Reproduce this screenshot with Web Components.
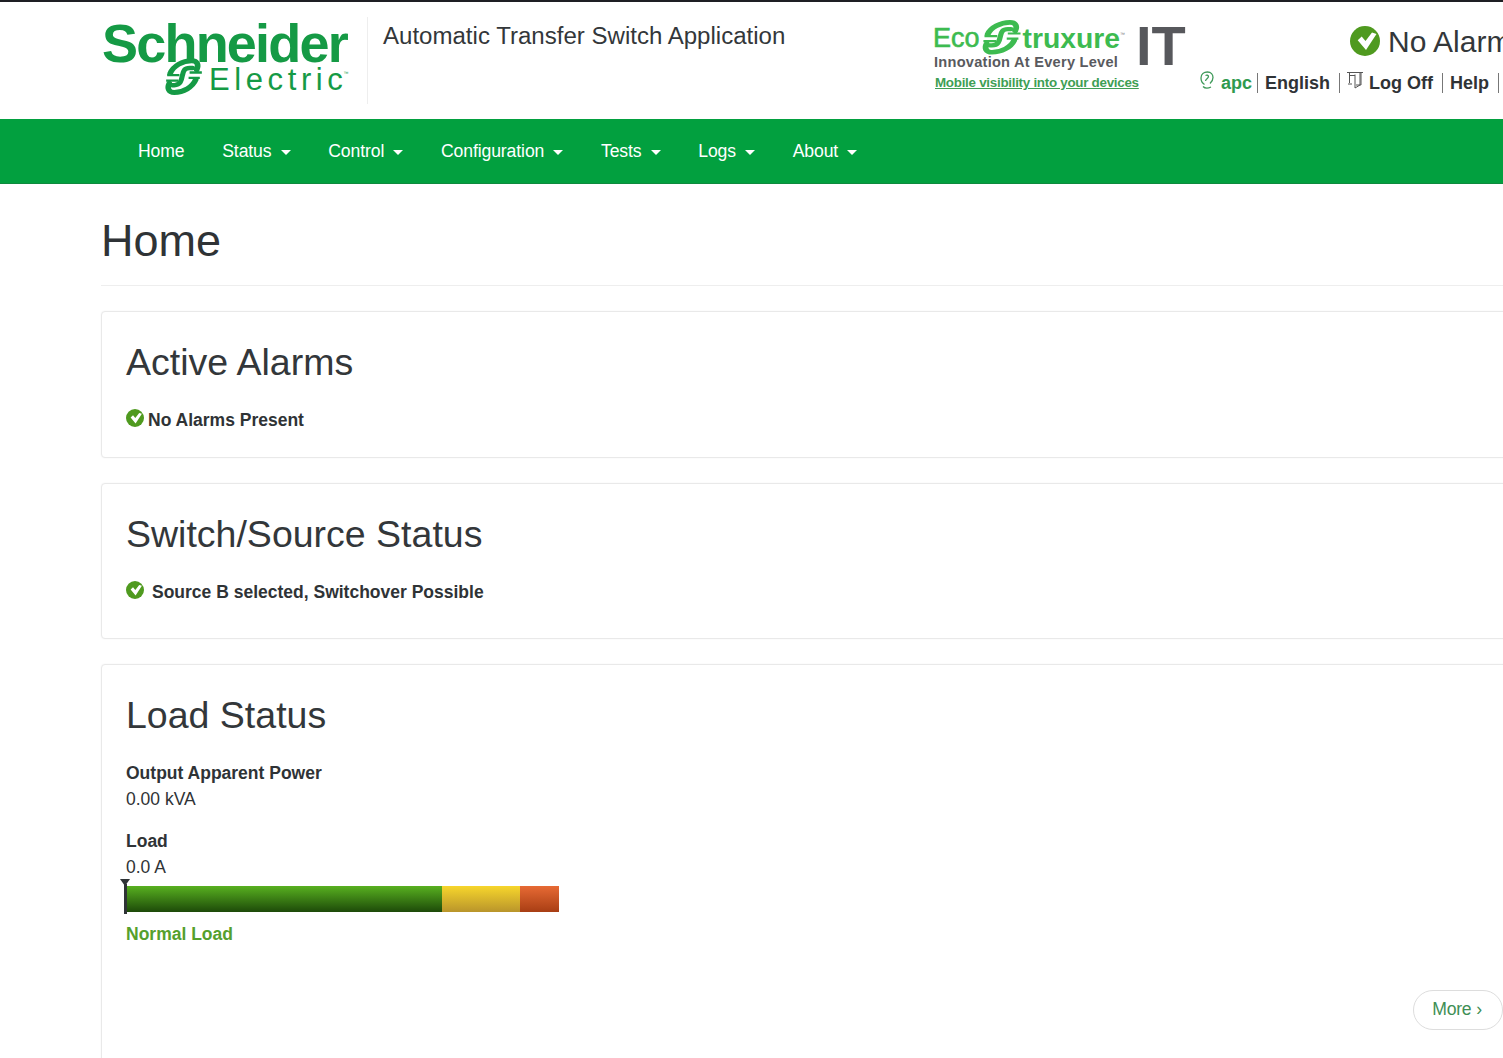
<!DOCTYPE html>
<html lang="en">
<head>
<meta charset="utf-8">
<title>Automatic Transfer Switch Application</title>
<style>
html,body{margin:0;padding:0;background:#fff;overflow:hidden;height:100%}
body{font-family:"Liberation Sans",Arial,sans-serif;color:#2f3336;width:1503px;overflow:hidden}
</style>
</head>
<body>
<ats-header></ats-header>
<ats-nav>
  <ats-nav-item>Home</ats-nav-item>
  <ats-nav-item caret>Status</ats-nav-item>
  <ats-nav-item caret>Control</ats-nav-item>
  <ats-nav-item caret>Configuration</ats-nav-item>
  <ats-nav-item caret>Tests</ats-nav-item>
  <ats-nav-item caret>Logs</ats-nav-item>
  <ats-nav-item caret>About</ats-nav-item>
</ats-nav>
<ats-page heading="Home">
  <ats-card heading="Active Alarms" h="147">
    <ats-status gap="4">No Alarms Present</ats-status>
  </ats-card>
  <ats-card heading="Switch/Source Status" h="156">
    <ats-status gap="8">Source B selected, Switchover Possible</ats-status>
  </ats-card>
  <ats-card heading="Load Status" h="420">
    <ats-reading first label="Output Apparent Power" value="0.00 kVA"></ats-reading>
    <ats-reading label="Load" value="0.0 A"></ats-reading>
    <ats-loadbar>Normal Load</ats-loadbar>
    <ats-more>More ›</ats-more>
  </ats-card>
</ats-page>
<script>
const MARK = c => `<svg viewBox="0 0 50 44" width="100%" height="100%" preserveAspectRatio="none" fill="none" stroke="${c}" stroke-linecap="round" aria-hidden="true">
  <path stroke-width="5.5" d="M11 18C14 10 23 4 32 4c6 0 7 5 5 10"/>
  <path stroke-width="5.5" d="M36 25C33 33 24 39 15 39c-6 0-7-5-5-10"/>
  <path stroke-width="5" d="M33 12h-3c-5 0-6 3-7 8-1 6-2 11-8 11h-2"/>
  <path stroke-width="2.6" stroke-linecap="butt" d="M8 20H20M7 26H19M30 17H42M29 23H40"/>
</svg>`;
const CHECK = `<svg viewBox="0 0 30 30" width="100%" height="100%" aria-hidden="true"><circle cx="15" cy="15" r="15" fill="#4f9a1f"/><path d="M7.700 14.300L11.700 10.500 15.500 15 22 6.500 26.500 8 16 24Z" fill="#fff"/></svg>`;
function def(name, build, css){
  customElements.define(name, class extends HTMLElement{
    connectedCallback(){
      if(this.shadowRoot) return;
      const r=this.attachShadow({mode:'open'});
      r.innerHTML=`<style>${css}</style>`+build(this);
    }
  });
}
def('ats-mark', e=>MARK(e.getAttribute('color')), `:host{display:block;flex:none}svg{display:block}`);
def('ats-header', ()=>`
  <div class="logo">
    <div class="sch">Schneider</div>
    <div class="el"><ats-mark color="#159a45" style="width:51px;height:40px;margin-top:-12px"></ats-mark><span>Electric</span><sup>™</sup></div>
  </div>
  <div class="title">Automatic Transfer Switch Application</div>
  <div class="eco">
    <div class="row1">
      <div>
        <div class="brand"><span class="e">Eco</span><ats-mark color="#3dbb50" style="width:53px;height:37.5px;margin:2px -6px 0 -4px"></ats-mark><span class="t">truxure</span><sup>™</sup></div>
        <div class="inn">Innovation At Every Level</div>
      </div>
      <div class="it">IT</div>
    </div>
    <a class="mob">Mobile visibility into your devices</a>
  </div>
  <div class="right">
    <div class="alarm"><span class="chk">${CHECK}</span><span>No Alarms</span></div>
    <div class="links">
      <svg class="user" viewBox="0 0 14 19" width="14" height="19" fill="none" stroke="#3f9a5a" stroke-width="1.3"><path d="M4.500 13.500C2 12 1 9.500 1 7 1 3 4 1 7.500 1c3.500 0 5.500 2.500 5.500 5.500 0 2.500-1.300 4.500-3 6"/><path d="M5.500 10C5.500 8 8.500 7.500 8.500 5.500 8.500 4 6.500 4 5.500 4.500M3 15.500c2 2 5 2 8 .5"/></svg>
      <span class="apc">apc</span><i></i><b class="w1">English</b><i class="s2"></i>
      <svg class="door" viewBox="0 0 18 18" width="18" height="18" fill="none" stroke="#555" stroke-width="1"><path d="M1 1.500H17M3.500 2V12M15 2V14H10M9 3.500V17L14 14V2M4 4.500H9M2 13H6"/></svg>
      <b class="w2">Log Off</b><i class="s2"></i><b class="w3">Help</b><i class="s2"></i>
    </div>
  </div>`,
`:host{display:flex;box-sizing:border-box;height:119px;width:1700px;border-top:2px solid #1e1f24;padding-left:103px;background:#fff}
.logo{width:265px;flex:none;border-right:1px solid #eee;height:87px;margin-top:15px;box-sizing:border-box;position:relative}
.sch{font:bold 54px/44px "Liberation Sans",sans-serif;letter-spacing:-1.8px;color:#159a45;margin-top:4px;margin-left:-1px;white-space:nowrap}
.el{display:flex;align-items:center;margin-left:56px;margin-top:-4px;height:44px;color:#159a45}
.el span{font:31px/44px "Liberation Sans",sans-serif;letter-spacing:4.6px;margin-left:-1px;margin-top:-7px}
sup{font:5px/5px "Liberation Sans",sans-serif;align-self:flex-start;margin-top:10px;margin-left:-4px}
.title{flex:none;width:551px;margin-left:15px;padding-top:19px;font:24.05px/30px "Liberation Sans",sans-serif;color:#33373a;white-space:nowrap}
.eco{flex:none;width:266px;padding-top:15px;box-sizing:border-box}
.row1{display:flex}
.brand{display:flex;align-items:center;height:39px;width:205px;color:#3dbb50;position:relative}
.brand sup{margin-top:15px;margin-left:0;color:#777}
.e{font:27px/39px "Liberation Sans",sans-serif;-webkit-text-stroke:.6px #3dbb50;margin-top:4px;margin-left:-1px}
.t{font:bold 28.3px/39px "Liberation Sans",sans-serif;margin-top:4px}
.inn{font:bold 14.6px/17px "Liberation Sans",sans-serif;letter-spacing:.25px;color:#595a5e;white-space:nowrap;margin-top:-2px}
.it{font:bold 56px/40px "Liberation Sans",sans-serif;color:#57585c;margin-left:-3px;margin-top:9px;height:40px}
.mob{display:block;font:bold 13.4px/16px "Liberation Sans",sans-serif;letter-spacing:-.28px;color:#3f9f55;text-decoration:underline;margin:4px 0 0 1px;white-space:nowrap}
.right{flex:none;width:320px;position:relative}
.alarm{display:flex;align-items:center;height:32px;margin-top:24px;margin-left:150px;font:30px/32px "Liberation Sans",sans-serif;color:#33373a;white-space:nowrap}
.chk{width:30px;height:30px;margin-right:8px;flex:none;margin-top:-3px}
.links{display:flex;align-items:center;height:22px;margin-top:14px;font:bold 18px/22px "Liberation Sans",sans-serif;color:#2f3336;white-space:nowrap}
.user{margin-top:-5px;margin-right:7px;flex:none}
.apc{color:#2f9a4e}
i{display:block;width:1px;height:20px;background:#777;margin:0 7px 0 5px;flex:none}
.s2{margin-left:9px;margin-right:7px}
.door{margin-right:5px;margin-top:-6px;flex:none;margin-left:-1px}
b{font-weight:bold}`);
def('ats-nav', ()=>`<slot></slot>`,
`:host{display:flex;box-sizing:border-box;height:65px;background:#02a03f;border-bottom:1px solid #0f8a3e;padding:0 0 0 138px;align-items:center;gap:37.7px}`);
def('ats-nav-item', e=>`<slot></slot>${e.hasAttribute('caret')?'<span class="c"></span>':''}`,
`:host{display:flex;align-items:center;font:17.6px/22px "Liberation Sans",sans-serif;letter-spacing:-.1px;color:#fff;white-space:nowrap}
.c{width:0;height:0;border:5px solid transparent;border-top-color:#fff;border-bottom:0;margin-left:9px;margin-top:2px}`);
def('ats-page', e=>`<h1>${e.getAttribute('heading')}</h1><div class="cards"><slot></slot></div>`,
`:host{display:block;box-sizing:border-box;width:1600px;margin-left:101px}
h1{margin:0;box-sizing:border-box;height:102px;padding-top:31px;font:normal 45px/52px "Liberation Sans",sans-serif;color:#2f3336;border-bottom:1px solid #eee}
.cards{display:flex;flex-direction:column;gap:25px;padding-top:25px;width:1426px}`);
def('ats-card', e=>{e.style.height=e.getAttribute('h')+'px';return `<h2>${e.getAttribute('heading')}</h2><slot></slot>`},
`:host{display:block;box-sizing:border-box;flex:none;position:relative;border:1px solid #e9e9e9;border-radius:4px;box-shadow:0 0 2px rgba(0,0,0,.05);padding:26px 24px 0;background:#fff}
h2{margin:0 0 24px;font:normal 37.5px/48px "Liberation Sans",sans-serif;color:#33373a}`);
def('ats-status', e=>`<span class="i">${CHECK}</span><span style="margin-left:${e.getAttribute('gap')}px"><slot></slot></span>`,
`:host{display:flex;align-items:center;height:20px;font:bold 17.5px/20px "Liberation Sans",sans-serif;color:#2f3336}
.i{width:18px;height:18px;flex:none;margin-top:-4px}`);
def('ats-reading', e=>{if(e.hasAttribute('first'))e.style.marginTop='-2px';return `<div class="l">${e.getAttribute('label')}</div><div class="v">${e.getAttribute('value')}</div>`},
`:host{display:block;margin-bottom:17px;font:17.5px/25px "Liberation Sans",sans-serif;color:#2f3336}
.l{font-weight:bold}.v{margin-top:1px}`);
def('ats-loadbar', ()=>`<div class="bar"><span class="g"></span><span class="y"></span><span class="o"></span><span class="m"></span></div><div class="t"><slot></slot></div>`,
`:host{display:block;margin-top:-11px}
.bar{display:flex;position:relative;height:26px;width:433px}
.bar span{display:block;height:100%}
.g{width:316px;background:linear-gradient(#58b020,#1d4a09)}
.y{width:78px;background:linear-gradient(#f7d62c,#b9952b)}
.o{width:39px;background:linear-gradient(#e76a34,#a83e14)}
.bar .m{position:absolute;left:-2px;top:-2px;width:3px;height:30px;background:#2f3336}
.bar .m::before{content:"";position:absolute;left:-4px;top:-5px;border:5.5px solid transparent;border-top:7px solid #2f3336;border-bottom:0}
.t{margin-top:11px;font:bold 17.5px/22px "Liberation Sans",sans-serif;color:#55a02d}`);
def('ats-more', ()=>`<slot></slot>`,
`:host{position:absolute;left:1311px;top:325px;box-sizing:border-box;width:90px;height:40px;padding:0 2px 2px 0;border:1px solid #ddd;border-radius:20px;display:flex;align-items:center;justify-content:center;font:17.6px/22px "Liberation Sans",sans-serif;letter-spacing:-.2px;color:#3f8f55;background:#fff}`);
</script>
</body>
</html>
